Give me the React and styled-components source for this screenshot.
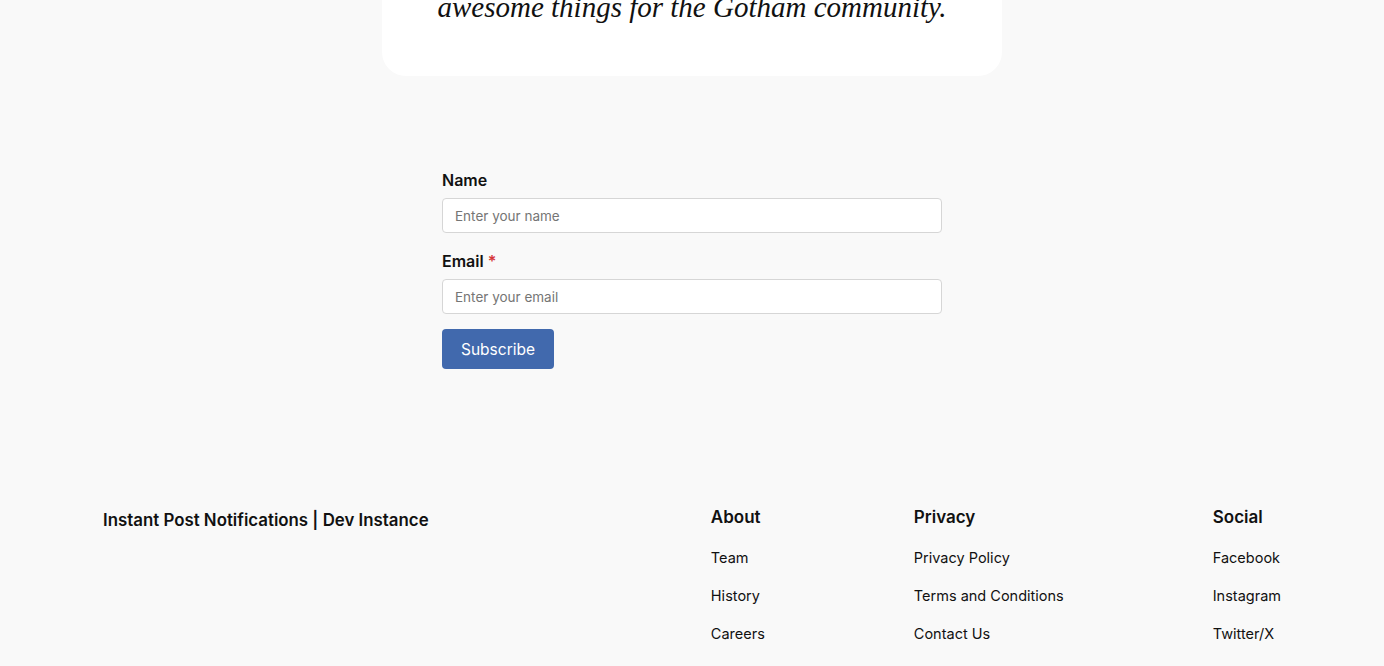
import { createGlobalStyle, styled } from "styled-components";

const GlobalStyle = createGlobalStyle`
  html, body {
    margin: 0;
    padding: 0;
    background: #f9f9f9;
    font-family: Inter, "Noto Sans", sans-serif;
    color: #111;
    overflow: hidden;
  }
`;

const columns = [
  { title: "About", links: ["Team", "History", "Careers"] },
  { title: "Privacy", links: ["Privacy Policy", "Terms and Conditions", "Contact Us"] },
  { title: "Social", links: ["Facebook", "Instagram", "Twitter/X"] },
];

const App = () => {
  return (
    <Page>
      <GlobalStyle />
      <QuoteCard>
        <Quote>awesome things for the Gotham community.</Quote>
      </QuoteCard>

      <Form onSubmit={(e) => e.preventDefault()}>
        <Label htmlFor="name">Name</Label>
        <Input id="name" type="text" placeholder="Enter your name" />
        <Label htmlFor="email" $spaced>
          Email <Required>*</Required>
        </Label>
        <Input id="email" type="email" placeholder="Enter your email" />
        <Subscribe type="submit">Subscribe</Subscribe>
      </Form>

      <Footer>
        <Brand>Instant Post Notifications | Dev Instance</Brand>
        <Columns>
          {columns.map((col) => (
            <Column key={col.title}>
              <ColumnTitle>{col.title}</ColumnTitle>
              {col.links.map((link) => (
                <FooterLink key={link} href="#">
                  {link}
                </FooterLink>
              ))}
            </Column>
          ))}
        </Columns>
      </Footer>
    </Page>
  );
};

const Page = styled.div`
  min-height: 666px;
  display: flex;
  flex-direction: column;
  align-items: center;
`;

const QuoteCard = styled.section`
  width: 620px;
  margin-top: -12px;
  padding: 0 0 50px;
  background: #fff;
  border-radius: 0 0 24px 24px;
  box-sizing: border-box;
  text-align: center;
`;

const Quote = styled.p`
  margin: 0;
  font-family: "Liberation Serif", "DejaVu Serif", serif;
  font-style: italic;
  font-size: 29px;
  line-height: 38px;
  color: #111;
`;

const Form = styled.form`
  width: 500px;
  margin-top: 94px;
  display: flex;
  flex-direction: column;
  align-items: flex-start;
`;

const Label = styled.label`
  font-size: 16px;
  font-weight: 600;
  line-height: 20px;
  color: #111;
  margin-top: ${(p) => (p.$spaced ? "18px" : "0")};
  margin-bottom: 8px;
`;

const Required = styled.span`
  color: #d63638;
`;

const Input = styled.input`
  width: 100%;
  height: 35px;
  box-sizing: border-box;
  padding: 0 12px;
  border: 1px solid #d6d6d6;
  border-radius: 4px;
  background: #fff;
  font-family: Inter, sans-serif;
  font-size: 13.5px;
  color: #111;

  &::placeholder {
    color: #757575;
  }
`;

const Subscribe = styled.button`
  margin-top: 15px;
  width: 112px;
  height: 40px;
  border: none;
  border-radius: 4px;
  background: #4169ad;
  color: #fff;
  font-family: Inter, sans-serif;
  font-size: 15.5px;
  cursor: pointer;
`;

const Footer = styled.footer`
  width: 100%;
  box-sizing: border-box;
  margin-top: 137px;
  padding: 0 103px;
  display: flex;
  justify-content: space-between;
  align-items: flex-start;
`;

const Brand = styled.div`
  margin-top: 3px;
  font-size: 16.85px;
  font-weight: 600;
  line-height: 22px;
`;

const Columns = styled.div`
  display: flex;
  gap: 149px;
`;

const Column = styled.div`
  display: flex;
  flex-direction: column;
  gap: 18px;
`;

const ColumnTitle = styled.h3`
  margin: 0 0 2px;
  font-size: 17px;
  font-weight: 600;
  line-height: 22px;
`;

const FooterLink = styled.a`
  font-size: 14.5px;
  line-height: 20px;
  color: #111;
  text-decoration: none;
`;

export default App;
